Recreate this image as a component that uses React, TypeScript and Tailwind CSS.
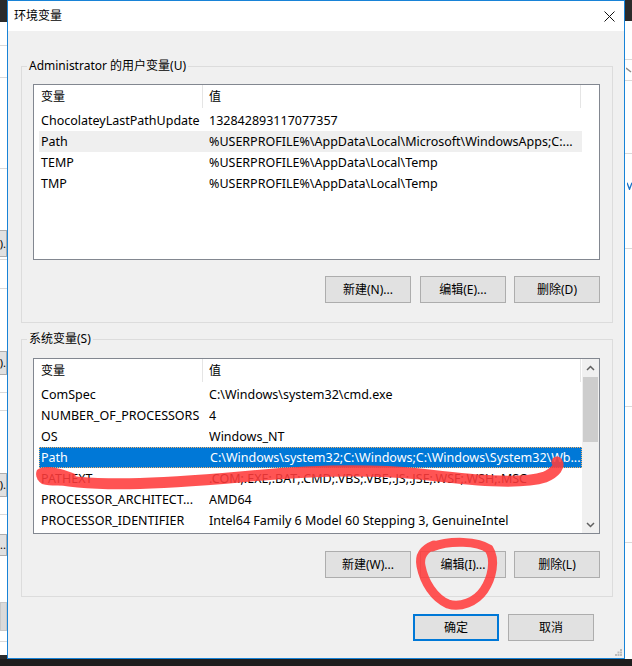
import React from "react";

type Row = { name: string; value: string; state?: "sel" | "hover" };

const userRows: Row[] = [
  { name: "ChocolateyLastPathUpdate", value: "132842893117077357" },
  { name: "Path", value: "%USERPROFILE%\\AppData\\Local\\Microsoft\\WindowsApps;C:...", state: "hover" },
  { name: "TEMP", value: "%USERPROFILE%\\AppData\\Local\\Temp" },
  { name: "TMP", value: "%USERPROFILE%\\AppData\\Local\\Temp" },
];

const sysRows: Row[] = [
  { name: "ComSpec", value: "C:\\Windows\\system32\\cmd.exe" },
  { name: "NUMBER_OF_PROCESSORS", value: "4" },
  { name: "OS", value: "Windows_NT" },
  { name: "Path", value: "C:\\Windows\\system32;C:\\Windows;C:\\Windows\\System32\\Wb...", state: "sel" },
  { name: "PATHEXT", value: ".COM;.EXE;.BAT;.CMD;.VBS;.VBE;.JS;.JSE;.WSF;.WSH;.MSC" },
  { name: "PROCESSOR_ARCHITECT...", value: "AMD64" },
  { name: "PROCESSOR_IDENTIFIER", value: "Intel64 Family 6 Model 60 Stepping 3, GenuineIntel" },
];

function Chevron({ up }: { up?: boolean }) {
  return (
    <svg width="9" height="6" viewBox="0 0 9 6">
      <path
        d={up ? "M1 5 L4.5 1.5 L8 5" : "M1 1 L4.5 4.5 L8 1"}
        fill="none"
        stroke="#606060"
        strokeWidth="1.5"
      />
    </svg>
  );
}

function ListBox({ rows, scroll }: { rows: Row[]; scroll?: boolean }) {
  return (
    <div className="flex h-[176px] w-[567px] border border-[#828790] bg-white">
      <div className="flex w-[548px] flex-col">
        <div className="flex h-[23px] shrink-0">
          <div className="flex h-full w-[169px] items-center border-r border-[#e5e5e5] pl-[7px]">变量</div>
          <div className="flex h-full w-[378px] items-center border-r border-[#e5e5e5] pl-[6px]">值</div>
        </div>
        <div className="mt-[2px] flex flex-col pl-[5px] text-[12.5px]">
          {rows.map((r, i) => (
            <div
              key={i}
              className={
                "flex h-[21px] w-[543px] items-center whitespace-nowrap " +
                (r.state === "sel"
                  ? "border border-dotted border-[#f7b26a] bg-[#0078d7] text-white"
                  : r.state === "hover"
                  ? "bg-[#efefef]"
                  : "")
              }
            >
              <div className={"w-[170px] overflow-hidden " + (r.state === "sel" ? "pl-[1px]" : "pl-[2px]")}>{r.name}</div>
              <div className="flex-1 overflow-hidden">{r.value}</div>
            </div>
          ))}
        </div>
      </div>
      {scroll ? (
        <div className="ml-auto flex w-[17px] flex-col bg-[#f0f0f0]">
          <div className="flex h-[17px] items-center justify-center">
            <Chevron up />
          </div>
          <div className="mx-[1px] mt-px h-[65px] bg-[#cdcdcd]" />
          <div className="flex-1" />
          <div className="flex h-[17px] items-center justify-center">
            <Chevron />
          </div>
        </div>
      ) : null}
    </div>
  );
}

function Btn({ children, primary, className = "" }: { children: React.ReactNode; primary?: boolean; className?: string }) {
  return (
    <div
      className={
        "flex h-[27px] w-[86px] items-center justify-center bg-[#e1e1e1] " +
        (primary ? "border-2 border-[#0078d7] " : "border border-[#adadad] ") +
        className
      }
    >
      {children}
    </div>
  );
}

function Group({
  legend,
  rows,
  scroll,
  btns,
  className = "",
  innerTop,
  btnTop,
}: {
  legend: string;
  rows: Row[];
  scroll?: boolean;
  btns: string[];
  className?: string;
  innerTop: string;
  btnTop: string;
}) {
  return (
    <fieldset className={"w-[592px] border border-[#dcdcdc] px-[11px] " + className}>
      <legend className="-ml-[6px] px-[2px] leading-[16px]">{legend}</legend>
      <div className={innerTop}>
        <ListBox rows={rows} scroll={scroll} />
        <div className={"flex justify-end pr-px " + btnTop}>
          <Btn>{btns[0]}</Btn>
          <Btn className="ml-[9px]">{btns[1]}</Btn>
          <Btn className="ml-[8px]">{btns[2]}</Btn>
        </div>
      </div>
    </fieldset>
  );
}

function LeftStrip() {
  const line = "h-px shrink-0 bg-[#d9d9d9]";
  const btn = "flex shrink-0 items-center justify-end overflow-hidden border-y border-r border-[#adadad] bg-[#e1e1e1] text-[11px]";
  return (
    <div className="flex h-full w-[7px] flex-col overflow-hidden bg-white">
      <div className="h-[22px] shrink-0 bg-[#2b2b2b]" />
      <div className="h-[23px] shrink-0" />
      <div className={line} />
      <div className="h-[31px] shrink-0" />
      <div className={line} />
      <div className="h-[90px] shrink-0" />
      <div className={line} />
      <div className="h-[61px] shrink-0" />
      <div className={"h-[27px] " + btn}>).</div>
      <div className="h-[2px] shrink-0" />
      <div className={line} />
      <div className="h-[28px] shrink-0" />
      <div className={line} />
      <div className="h-[62px] shrink-0" />
      <div className={"h-[24px] " + btn}>).</div>
      <div className="h-[17px] shrink-0" />
      <div className={line} />
      <div className="h-[17px] shrink-0" />
      <div className={line} />
      <div className="h-[62px] shrink-0" />
      <div className={"h-[24px] " + btn}>).</div>
      <div className="h-[17px] shrink-0" />
      <div className={line} />
      <div className="h-[19px] shrink-0" />
      <div className={"h-[22px] " + btn}>..</div>
      <div className="h-[46px] shrink-0" />
      <div className="h-[29px] shrink-0 border border-[#c8c8c8] bg-[#dadada]" />
      <div className="h-[10px] shrink-0" />
      <div className={line} />
      <div className="flex-1" />
      <div className="h-[4px] shrink-0 bg-[#2b2b2b]" />
    </div>
  );
}

function RightStrip() {
  const line = "h-px shrink-0 bg-[#d9d9d9]";
  return (
    <div className="flex h-full w-[7px] flex-col overflow-hidden bg-white">
      <div className="h-[21px] shrink-0 bg-[#2b2b2b]" />
      <div className="h-[38px] shrink-0" />
      <div className={line} />
      <div className="flex h-[20px] shrink-0 items-center pl-[1px]">
        <svg width="6" height="6" viewBox="0 0 6 6">
          <path d="M0 1 L5 5" stroke="#8a8a8a" strokeWidth="1.4" />
        </svg>
      </div>
      <div className={line} />
      <div className="h-[72px] shrink-0" />
      <div className={line} />
      <div className="h-[26px] shrink-0" />
      <div className="flex h-[12px] shrink-0 items-center pl-[2px]">
        <svg width="6" height="8" viewBox="0 0 6 8">
          <path d="M0 0 L3 8 L6 0" fill="none" stroke="#1a73c8" strokeWidth="1.6" />
        </svg>
      </div>
      <div className="h-[56px] shrink-0" />
      <div className={line} />
      <div className="h-[157px] shrink-0" />
      <div className={line} />
      <div className="h-[135px] shrink-0" />
      <div className={line} />
      <div className="flex-1" />
    </div>
  );
}

export default function App() {
  return (
    <div className="relative flex h-[666px] w-[632px] flex-col overflow-hidden bg-[#1e1e1e] font-['Noto_Sans','Noto_Sans_CJK_SC',sans-serif] text-[12px] leading-[16px] text-black">
      <div className="flex h-[659px] shrink-0">
        <LeftStrip />
        <div className="flex h-full w-[618px] flex-col border border-[#1883d7] bg-[#f0f0f0]">
          <div className="flex h-[30px] shrink-0 items-center justify-between bg-white pl-[6px]">
            <span>环境变量</span>
            <div className="mr-[9px] flex h-[30px] w-[12px] items-center justify-center">
              <svg width="11" height="11" viewBox="0 0 11 11">
                <path d="M0.5 0.5 L10.5 10.5 M10.5 0.5 L0.5 10.5" stroke="#111" strokeWidth="1" />
              </svg>
            </div>
          </div>
          <div className="flex flex-1 flex-col pl-[13px]">
            <Group
              className="mt-[27px] pb-[19px]"
              innerTop="pt-[10px]"
              btnTop="mt-[16px]"
              legend="Administrator 的用户变量(U)"
              rows={userRows}
              btns={["新建(N)...", "编辑(E)...", "删除(D)"]}
            />
            <Group
              className="mt-[8px] pb-[18px]"
              innerTop="pt-[11px]"
              btnTop="mt-[17px]"
              legend="系统变量(S)"
              rows={sysRows}
              scroll
              btns={["新建(W)...", "编辑(I)...", "删除(L)"]}
            />
            <div className="mt-[17px] flex w-[573px] justify-end">
              <Btn primary>确定</Btn>
              <Btn className="ml-[9px]">取消</Btn>
            </div>
            <div className="mt-auto mb-[2px] mr-[2px] flex justify-end">
              <svg width="7" height="7" viewBox="0 0 7 7">
                <rect x="5" y="0" width="2" height="2" fill="#bcbcbc" />
                <rect x="2.5" y="2.5" width="2" height="2" fill="#bcbcbc" />
                <rect x="5" y="2.5" width="2" height="2" fill="#bcbcbc" />
                <rect x="0" y="5" width="2" height="2" fill="#bcbcbc" />
                <rect x="2.5" y="5" width="2" height="2" fill="#bcbcbc" />
                <rect x="5" y="5" width="2" height="2" fill="#bcbcbc" />
              </svg>
            </div>
          </div>
        </div>
        <RightStrip />
      </div>
      <svg
        className="pointer-events-none absolute left-0 top-0"
        width="632"
        height="666"
        viewBox="0 0 632 666"
      >
        <g opacity="0.88">
          <path
            d="M37 470 C 45 464, 60 468, 75 474 C 80 484, 60 488, 42 484 C 36 480, 35 474, 37 470 Z"
            fill="#ff3c3c"
          />
          <g fill="none" stroke="#ff3c3c" strokeLinecap="round" strokeLinejoin="round">
            <path
              d="M46 477 C 90 488, 160 484, 240 477 C 300 471, 360 468, 420 474 C 470 480, 520 485, 545 477 C 556 472, 560 466, 557 462"
              strokeWidth="11"
            />
            <path
              d="M432 547 C 450 540, 478 541, 489 549 C 496 560, 492 578, 484 590 C 476 602, 460 608, 448 604 C 434 598, 424 582, 421 566 C 419 556, 424 549, 434 545"
              strokeWidth="9"
            />
          </g>
        </g>
      </svg>
    </div>
  );
}
